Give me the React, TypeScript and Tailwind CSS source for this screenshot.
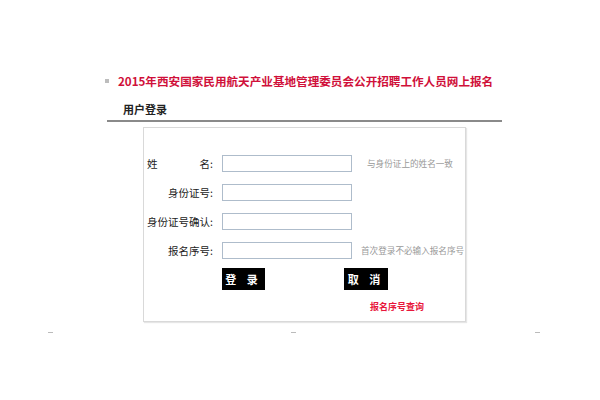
import React, { FC } from 'react'

type Field = {
  label: React.ReactNode
  hint?: string
  hintGap: string
}

const fields: Field[] = [
  {
    label: (
      <span className="flex w-full justify-between">
        <span>姓</span>
        <span>名:</span>
      </span>
    ),
    hint: '与身份证上的姓名一致',
    hintGap: 'ml-[15px]'
  },
  { label: '身份证号:', hintGap: '' },
  { label: '身份证号确认:', hintGap: '' },
  { label: '报名序号:', hint: '首次登录不必输入报名序号', hintGap: 'ml-[9px]' }
]

const App: FC = (): JSX.Element => {
  return (
    <div className="h-[400px] w-[600px] bg-white font-['Noto_Sans_CJK_SC',sans-serif] text-[#333]">
      {/* Title */}
      <div className="flex items-center pl-[105px] pt-[73px]">
        <span className="h-[4px] w-[4px] bg-[#bdbdbd]" />
        <h1 className="ml-[9px] text-[11.6px] leading-[16px] font-bold text-[#d0103a]">
          2015年西安国家民用航天产业基地管理委员会公开招聘工作人员网上报名
        </h1>
      </div>

      {/* Sub header */}
      <div className="mt-[13px] pl-[123px] text-[11px] leading-[14px] font-bold text-[#222]">用户登录</div>
      <div className="mt-[4px] ml-[107px] h-[2px] w-[395px] bg-[#8a8a8a]" />

      {/* Login box */}
      <div className="mt-[5px] ml-[143px] h-[195px] w-[323px] border border-[#d9d9d9] shadow-[1px_1px_1px_#e6e6e6]">
        <div className="flex flex-col gap-[12px] pt-[27px] pl-[3px]">
          {fields.map((f, i) => (
            <div key={i} className="flex h-[17px] items-center">
              <label className="flex w-[66px] shrink-0 justify-end text-[10.5px] leading-[17px] whitespace-nowrap text-[#222]">
                {f.label}
              </label>
              <input
                type="text"
                className="ml-[9px] h-[17px] w-[130px] shrink-0 border border-[#aebccb] bg-white outline-none"
              />
              {f.hint !== undefined && (
                <span className={`${f.hintGap} text-[8.6px] whitespace-nowrap text-[#999]`}>{f.hint}</span>
              )}
            </div>
          ))}
        </div>

        {/* Buttons */}
        <div className="mt-[9px] flex pl-[78px]">
          <button className="h-[22px] w-[43px] bg-black text-[11px] font-bold tracking-[4px] text-white">登 录</button>
          <button className="ml-[79px] h-[22px] w-[44px] bg-black text-[11px] font-bold tracking-[4px] text-white">取 消</button>
        </div>

        <div className="mt-[11px] pl-[226px] text-[9px] leading-[12px] font-bold text-[#e8173c]">报名序号查询</div>
      </div>

      {/* Bottom marks */}
      <div className="mt-[10px] flex pl-[48px]">
        <span className="h-px w-[5px] bg-[#bbb]" />
        <span className="ml-[238px] h-px w-[5px] bg-[#bbb]" />
        <span className="ml-[239px] h-px w-[5px] bg-[#bbb]" />
      </div>
    </div>
  )
}

export default App
